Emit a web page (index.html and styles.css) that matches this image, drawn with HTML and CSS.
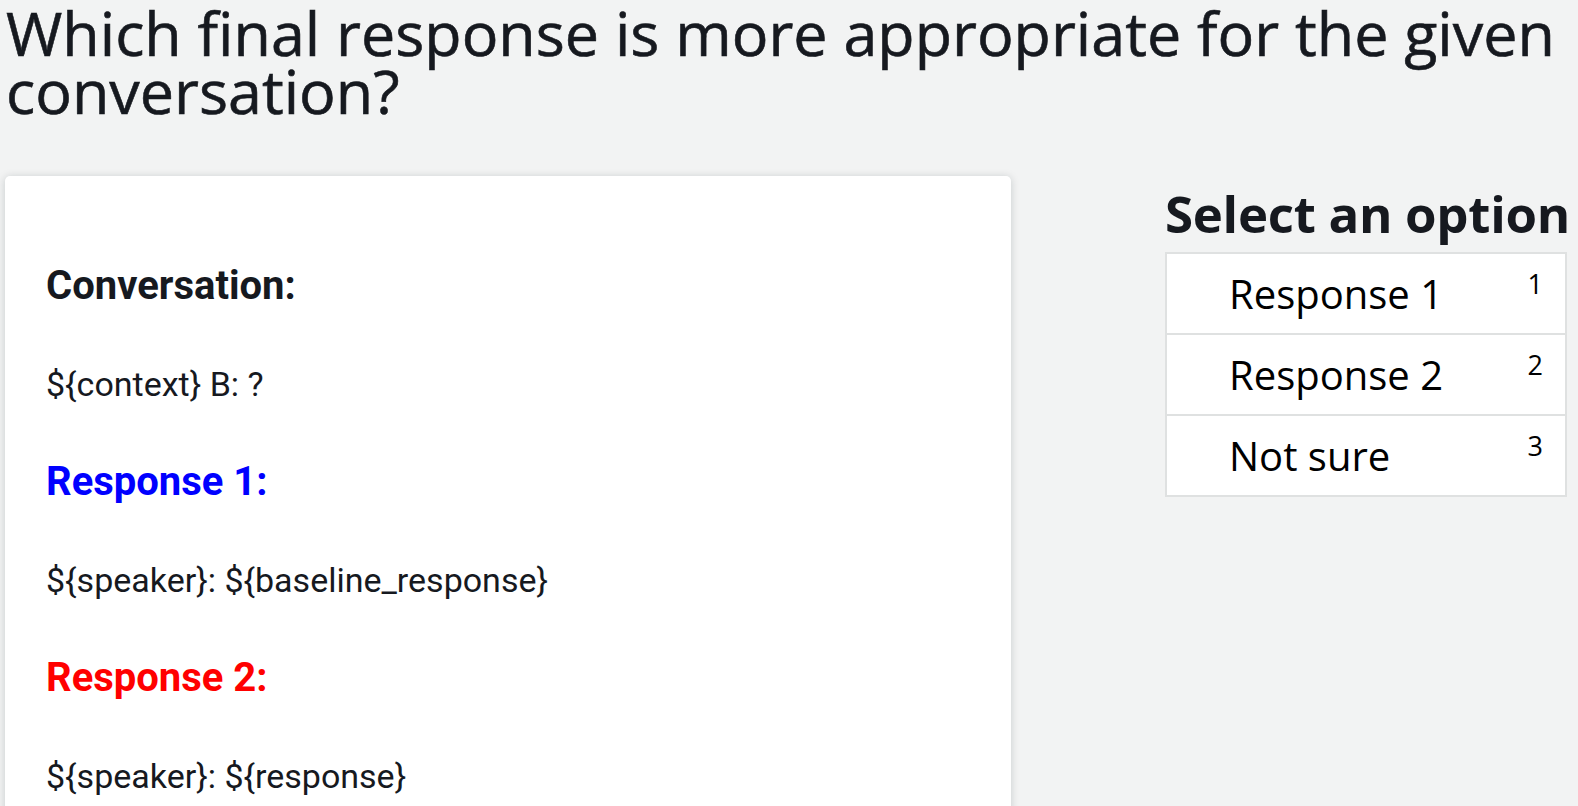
FILE: index.html
```html
<!DOCTYPE html>
<html lang="en">
<head>
<meta charset="utf-8">
<title>Which final response is more appropriate?</title>
<link rel="stylesheet" href="styles.css">
</head>
<body>
<div class="page">
  <h1 class="title">Which final response is more appropriate for the given conversation?</h1>
  <div class="layout">
    <section class="card">
      <h2 class="label">Conversation:</h2>
      <p class="text">${context} B: ?</p>
      <h2 class="label label-blue">Response 1:</h2>
      <p class="text">${speaker}: ${baseline_response}</p>
      <h2 class="label label-red">Response 2:</h2>
      <p class="text">${speaker}: ${response}</p>
    </section>
    <aside class="side">
      <h2 class="side-title">Select an option</h2>
      <ul class="options">
        <li class="option"><span class="option-text">Response 1</span><span class="option-key">1</span></li>
        <li class="option"><span class="option-text">Response 2</span><span class="option-key">2</span></li>
        <li class="option"><span class="option-text">Not sure</span><span class="option-key">3</span></li>
      </ul>
    </aside>
  </div>
</div>
</body>
</html>
```

FILE: styles.css
```css
* { box-sizing: border-box; }

html, body {
  margin: 0;
  padding: 0;
  background: #f2f3f3;
  color: #16191f;
  overflow: hidden;
}

.page {
  padding: 4px 0 0 5px;
}

.title {
  margin: 0;
  font-family: "Open Sans", "Noto Sans", sans-serif;
  font-weight: 400;
  font-size: 61px;
  line-height: 58px;
  padding-left: 1px;
  -webkit-text-stroke: 0.6px #16191f;
}

.layout {
  display: grid;
  grid-template-columns: 1006px 402px;
  column-gap: 154px;
  margin-top: 56px;
  align-items: start;
}

.card {
  background: #ffffff;
  border-radius: 5px;
  box-shadow: 0 1px 8px rgba(0, 28, 36, 0.18);
  padding: 86px 40px 120px 41px;
  display: flex;
  flex-direction: column;
  gap: 54px;
  font-family: Roboto, "Liberation Sans", sans-serif;
  min-height: 700px;
}

.label {
  margin: 0;
  font-size: 40px;
  line-height: 48px;
  font-weight: 700;
  color: #16191f;
}

.label-blue { color: #0000ff; }
.label-red { color: #ff0000; }

.text {
  margin: 0;
  font-size: 34px;
  line-height: 40px;
  font-weight: 400;
}

.side {
  font-family: "Open Sans", "Noto Sans", sans-serif;
  padding-top: 7px;
}

.side-title {
  margin: 0 0 8px 0;
  font-size: 51px;
  line-height: 61px;
  font-weight: 700;
  letter-spacing: -0.3px;
  white-space: nowrap;
}

.options {
  list-style: none;
  margin: 0;
  padding: 0;
  background: #ffffff;
  border: 2px solid #dfe1e1;
}

.option {
  display: flex;
  justify-content: space-between;
  align-items: flex-start;
  height: 79px;
  padding: 0 22px 0 62px;
}

.option + .option {
  border-top: 2px solid #dfe1e1;
  height: 81px;
}

.option-text {
  font-size: 40px;
  line-height: 79px;
  color: #000000;
}

.option-key {
  font-size: 27px;
  line-height: 27px;
  margin-top: 16px;
  color: #000000;
}
```
